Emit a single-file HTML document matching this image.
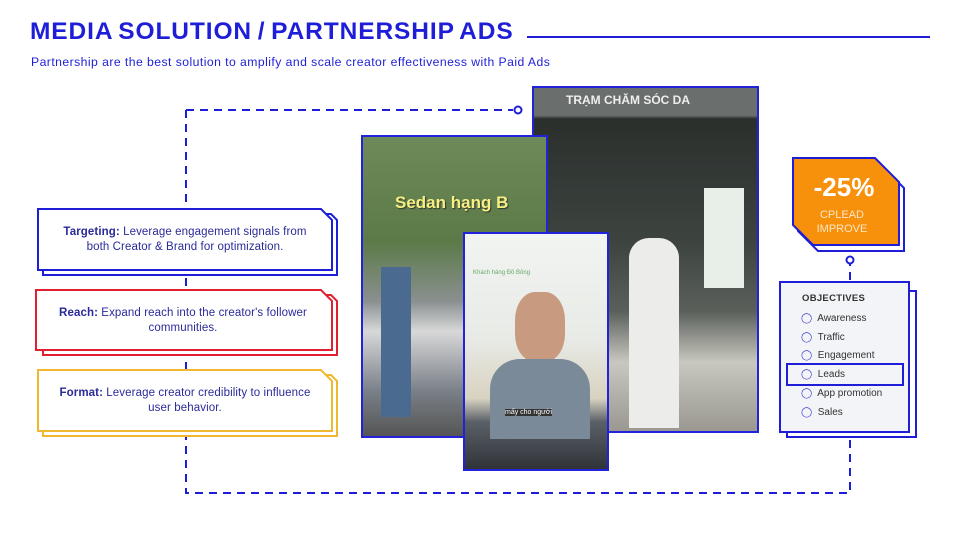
<!DOCTYPE html>
<html><head><meta charset="utf-8"><style>
*{margin:0;padding:0;box-sizing:border-box}
body{width:960px;height:540px;background:#fff;position:relative;overflow:hidden;font-family:"Liberation Sans",sans-serif;color:#1c1c9c}
.abs{position:absolute}
h1{position:absolute;left:30px;top:18px;font-size:24.5px;font-weight:bold;color:#1e1ed8;letter-spacing:0.9px;word-spacing:-2px}
.sub{left:31px;top:55px;font-size:12.2px;color:#1e1ed8;letter-spacing:0.45px}
.card{position:absolute;width:294px;height:61px;font-size:11.5px;text-align:center;line-height:15px;display:flex;align-items:center;justify-content:center;padding:0 16px;color:#2a2a9a;letter-spacing:0.1px}
.ph{position:absolute;border:2px solid #2222dd;overflow:hidden}
</style></head><body>
<h1>MEDIA SOLUTION / PARTNERSHIP ADS</h1>
<div class="abs" style="left:527px;top:36px;width:403px;height:1.5px;background:#1e1ed8"></div>
<div class="abs sub">Partnership are the best solution to amplify and scale creator effectiveness with Paid Ads</div>
<svg class="abs" style="left:0;top:0" width="960" height="540">
<g stroke="#1e1ed8" stroke-width="2" fill="none" stroke-dasharray="8 6">
<path d="M186 110 H513"/><path d="M186 110 V493 H850 V262"/>
</g>
<circle cx="518" cy="110" r="3.5" stroke="#1e1ed8" stroke-width="2" fill="#fff"/>
<circle cx="850" cy="260" r="3.5" stroke="#1e1ed8" stroke-width="2" fill="#fff"/>
<g stroke-width="2" fill="#fff">
<path d="M43 214 H331 L337 220 V275 H43 Z" stroke="#1e1ed8"/>
<path d="M38 209 H321 L332 220 V270 H38 Z" stroke="#1e1ed8"/>
<path d="M43 295 H331 L337 301 V355 H43 Z" stroke="#e02030"/>
<path d="M36 290 H321 L332 301 V350 H36 Z" stroke="#e02030"/>
<path d="M43 375 H331 L337 381 V436 H43 Z" stroke="#f0b830"/>
<path d="M38 370 H321 L332 381 V431 H38 Z" stroke="#f0b830"/>
</g>
</svg>
<div class="card" style="left:38px;top:209px"><span><b>Targeting:</b> Leverage engagement signals from both Creator &amp; Brand for optimization.</span></div>
<div class="card" style="left:36px;top:290px"><span><b>Reach:</b> Expand reach into the creator's follower communities.</span></div>
<div class="card" style="left:38px;top:370px"><span><b>Format:</b> Leverage creator credibility to influence user behavior.</span></div>
<!-- photos -->
<div class="ph" style="left:532px;top:86px;width:227px;height:347px;background:linear-gradient(180deg,#6a6e6c 0,#6a6e6c 8%,#2a2f2c 9%,#3d4440 45%,#5a5f5a 65%,#c8c8c0 80%,#9a9890 100%)">
<div class="abs" style="left:32px;top:5px;color:#eee;font-size:12px;font-weight:bold">TRẠM CHĂM SÓC DA</div>
<div class="abs" style="left:170px;top:100px;width:40px;height:100px;background:#e8efe8"></div>
<div class="abs" style="left:95px;top:150px;width:50px;height:190px;background:#ececea;border-radius:20px 20px 0 0"></div>
</div>
<div class="ph" style="left:361px;top:135px;width:187px;height:303px;background:linear-gradient(180deg,#6d8a58 0,#5c7a48 35%,#8a9090 55%,#d8d8d8 65%,#7a8088 85%,#555 100%)">
<div class="abs" style="left:32px;top:56px;color:#f5f080;font-size:17px;font-weight:bold;text-shadow:1px 1px 1px #333">Sedan hạng B</div>
<div class="abs" style="left:18px;top:130px;width:30px;height:150px;background:#4a6a90"></div>
</div>
<div class="ph" style="left:463px;top:232px;width:146px;height:239px;background:linear-gradient(180deg,#f2f4f2 0,#e8eae6 45%,#d8d2c0 70%,#5a6068 80%,#303438 100%)">
<div class="abs" style="left:8px;top:36px;font-size:6px;color:#6a6">Khách hàng Đồ Bông</div>
<div class="abs" style="left:50px;top:58px;width:50px;height:70px;background:#c89a80;border-radius:40%"></div>
<div class="abs" style="left:25px;top:125px;width:100px;height:80px;background:#7a8a98;border-radius:30px 30px 0 0"></div>
<div class="abs" style="left:40px;top:175px;font-size:7px;color:#fff;background:#333">mấy cho người</div>
</div>
<!-- orange -->
<svg class="abs" style="left:788px;top:155px" width="120" height="100">
<polygon points="10,9 92,9 116,33 116,96 30,96 10,76" fill="#fff" stroke="#1e1ed8" stroke-width="2"/>
<polygon points="5,3 87,3 111,27 111,90 25,90 5,70" fill="#f7900a" stroke="#1e1ed8" stroke-width="2"/>
</svg>
<div class="abs" style="left:792px;top:172px;width:104px;text-align:center;color:#fff;font-size:26px;font-weight:bold">-25%</div>
<div class="abs" style="left:792px;top:208px;width:100px;text-align:center;color:#fde6c8;font-size:11px;line-height:14px">CPLEAD<br>IMPROVE</div>
<!-- objectives -->
<div class="abs" style="left:786px;top:290px;width:131px;height:148px;border:2px solid #1e1ed8;background:#fff"></div>
<div class="abs" style="left:779px;top:281px;width:131px;height:152px;border:2px solid #1e1ed8;background:#f3f4f8;font-size:10px;color:#333">
<div style="position:absolute;left:21px;top:10px;font-weight:bold;font-size:9.5px;color:#333;letter-spacing:0.3px">OBJECTIVES</div>
<div style="position:absolute;left:20px;top:27px;line-height:18.7px">
<div><span style="color:#3a3ad0">◯</span>&nbsp; Awareness</div><div><span style="color:#3a3ad0">◯</span>&nbsp; Traffic</div><div><span style="color:#3a3ad0">◯</span>&nbsp; Engagement</div><div><span style="color:#3a3ad0">◯</span>&nbsp; Leads</div><div><span style="color:#3a3ad0">◯</span>&nbsp; App promotion</div><div><span style="color:#3a3ad0">◯</span>&nbsp; Sales</div></div>
<div style="position:absolute;left:5px;top:80px;width:118px;height:23px;border:2px solid #1e1ed8"></div>
</div>
</body></html>
